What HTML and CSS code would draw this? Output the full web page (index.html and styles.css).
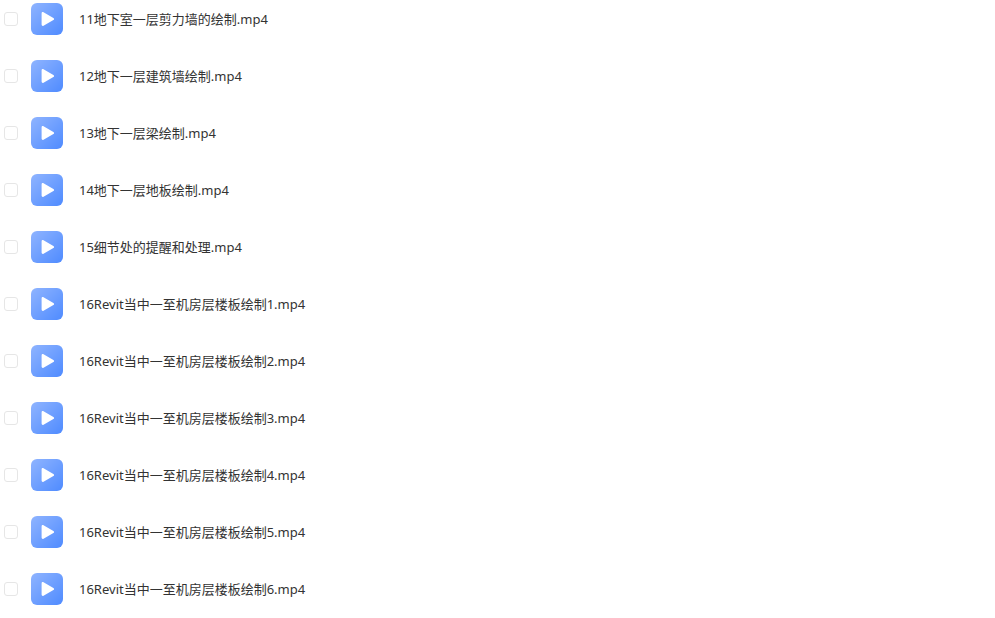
FILE: index.html
```html
<!DOCTYPE html>
<html lang="zh-CN">
<head>
    <meta charset="UTF-8">
    <title>文件列表</title>
    <link rel="stylesheet" href="styles.css">
</head>
<body>
    <svg class="defs" width="0" height="0" aria-hidden="true">
        <symbol id="video" viewBox="0 0 32 32">
            <path d="M10.6 10.4c0-1 1-1.6 1.9-1.1l9.9 5.6c.9.5.9 1.7 0 2.2l-9.9 5.6c-.9.5-1.9-.1-1.9-1.1z" fill="#fff"/>
        </symbol>
    </svg>
    <ul class="file-list">
        <li class="file-row"><span class="check"></span><span class="thumb"><svg><use href="#video"/></svg></span><span class="name">11地下室一层剪力墙的绘制.mp4</span></li>
        <li class="file-row"><span class="check"></span><span class="thumb"><svg><use href="#video"/></svg></span><span class="name">12地下一层建筑墙绘制.mp4</span></li>
        <li class="file-row"><span class="check"></span><span class="thumb"><svg><use href="#video"/></svg></span><span class="name">13地下一层梁绘制.mp4</span></li>
        <li class="file-row"><span class="check"></span><span class="thumb"><svg><use href="#video"/></svg></span><span class="name">14地下一层地板绘制.mp4</span></li>
        <li class="file-row"><span class="check"></span><span class="thumb"><svg><use href="#video"/></svg></span><span class="name">15细节处的提醒和处理.mp4</span></li>
        <li class="file-row"><span class="check"></span><span class="thumb"><svg><use href="#video"/></svg></span><span class="name">16Revit当中一至机房层楼板绘制1.mp4</span></li>
        <li class="file-row"><span class="check"></span><span class="thumb"><svg><use href="#video"/></svg></span><span class="name">16Revit当中一至机房层楼板绘制2.mp4</span></li>
        <li class="file-row"><span class="check"></span><span class="thumb"><svg><use href="#video"/></svg></span><span class="name">16Revit当中一至机房层楼板绘制3.mp4</span></li>
        <li class="file-row"><span class="check"></span><span class="thumb"><svg><use href="#video"/></svg></span><span class="name">16Revit当中一至机房层楼板绘制4.mp4</span></li>
        <li class="file-row"><span class="check"></span><span class="thumb"><svg><use href="#video"/></svg></span><span class="name">16Revit当中一至机房层楼板绘制5.mp4</span></li>
        <li class="file-row"><span class="check"></span><span class="thumb"><svg><use href="#video"/></svg></span><span class="name">16Revit当中一至机房层楼板绘制6.mp4</span></li>
    </ul>
</body>
</html>
```

FILE: styles.css
```css
html, body {
    margin: 0;
    height: 618px;
    overflow: hidden;
    background-color: #fff;
}

body {
    font-family: "Noto Sans", "Noto Sans CJK SC", sans-serif;
    font-size: 13px;
    line-height: 18px;
    color: #333;
}

.defs {
    display: block;
    height: 0;
}

.file-list {
    list-style: none;
    margin: 0;
    padding: 3px 0 0 4px;
    display: flex;
    flex-direction: column;
    gap: 25px;
}

.file-row {
    display: flex;
    align-items: center;
    height: 32px;
}

.check {
    width: 12px;
    height: 12px;
    border: 1px solid #e6e6e6;
    border-radius: 3px;
    background-color: #fff;
}

.thumb {
    width: 32px;
    height: 32px;
    margin-left: 13px;
    border-radius: 6px;
    background: linear-gradient(135deg, #8fb4ff 0%, #4f8bff 100%);
}

.thumb svg {
    display: block;
    width: 32px;
    height: 32px;
}

.name {
    margin-left: 16px;
}
```
